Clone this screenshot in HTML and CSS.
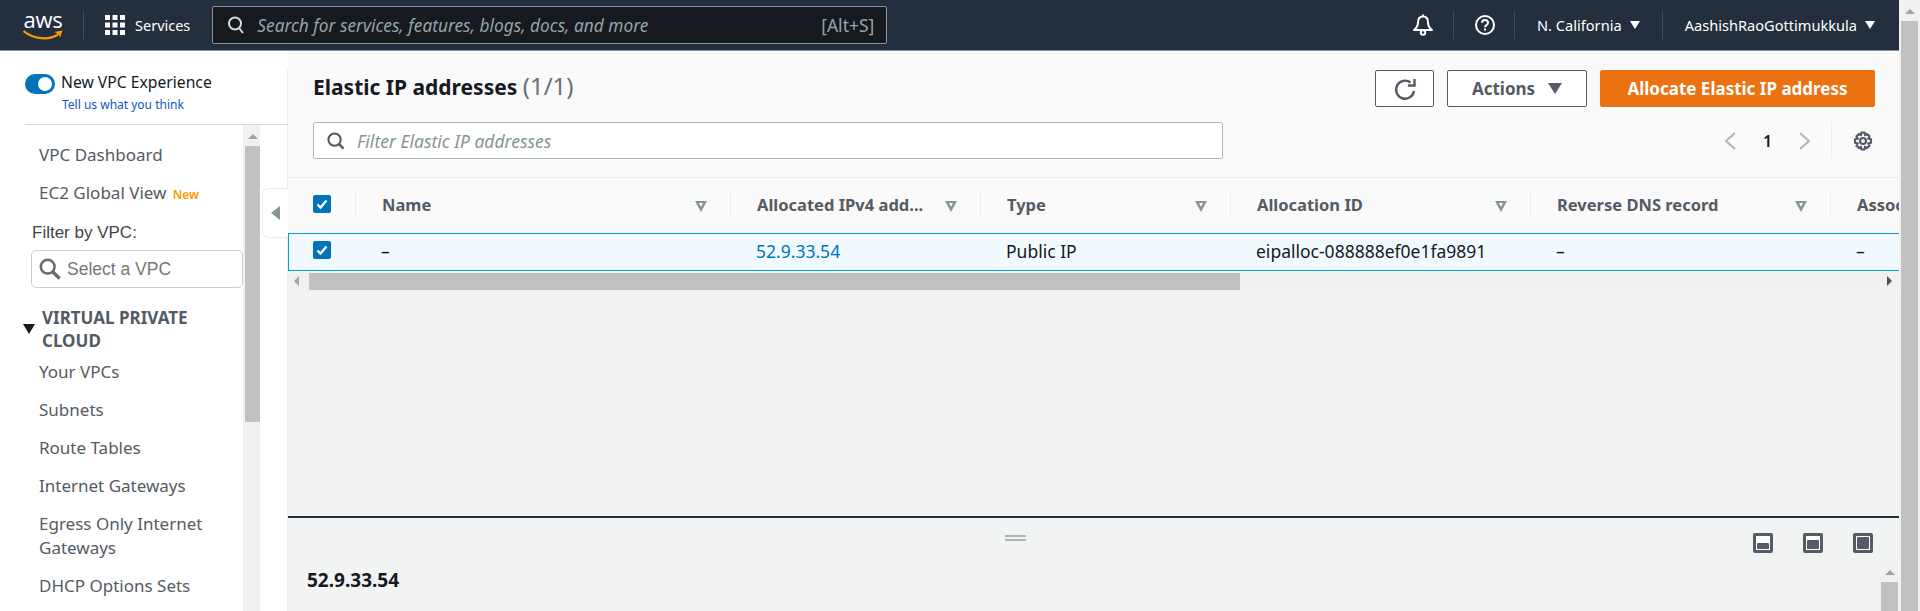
FILE: index.html
```html
<!DOCTYPE html>
<html lang="en">
<head>
<meta charset="utf-8">
<title>Elastic IP addresses</title>
<link rel="stylesheet" href="styles.css">
</head>
<body>
<div class="page">
  <div class="viewport">
    <header class="topbar">
      <div class="logo">
        <span class="logo-text">aws</span>
        <svg class="smile" width="40" height="10" viewBox="0 0 40 10"><path d="M0.500 1c11 9 26 9 34.500 3.500" fill="none" stroke="#f90" stroke-width="2.200"/><path d="M31 2l8.500-1.500-2.500 7.500c-.2-2.500-1.500-4.500-6-6z" fill="#f90"/></svg>
      </div>
      <button class="services">
        <svg width="20" height="20" viewBox="0 0 20 20" fill="#fff"><rect x="0" y="0" width="5" height="5"/><rect x="7.500" y="0" width="5" height="5"/><rect x="15" y="0" width="5" height="5"/><rect x="0" y="7.500" width="5" height="5"/><rect x="7.500" y="7.500" width="5" height="5"/><rect x="15" y="7.500" width="5" height="5"/><rect x="0" y="15" width="5" height="5"/><rect x="7.500" y="15" width="5" height="5"/><rect x="15" y="15" width="5" height="5"/></svg>
        <span>Services</span>
      </button>
      <div class="global-search">
        <svg width="18" height="18" viewBox="0 0 18 18" fill="none" stroke="#d5dbdb" stroke-width="2"><circle cx="8" cy="7.500" r="6"/><path d="M12 12l4 5"/></svg>
        <span class="gs-text">Search for services, features, blogs, docs, and more</span>
        <span class="gs-key">[Alt+S]</span>
      </div>
      <div class="top-right">
        <div class="top-item bell">
          <svg width="20" height="22" viewBox="0 0 20 22" fill="none" stroke="#fff" stroke-width="2" stroke-linejoin="round"><path d="M10 2.500c-3.500 0-5 2.500-5 6 0 3.500-1.500 5.500-4 7.500h18c-2.500-2-4-4-4-7.500 0-3.500-1.500-6-5-6z"/><path d="M10 0.500v2"/><circle cx="10" cy="18.500" r="2.200"/></svg>
        </div>
        <div class="top-item help">
          <svg width="20" height="20" viewBox="0 0 20 20" fill="none" stroke="#fff" stroke-width="2"><circle cx="10" cy="10" r="9"/><path d="M7 7.800c0-3.800 6-3.800 6 0 0 2.400-3 2.200-3 4.500"/><path d="M10 13.500v2"/></svg>
        </div>
        <div class="top-item region">N. California <span class="caret"></span></div>
        <div class="top-item user">AashishRaoGottimukkula <span class="caret"></span></div>
      </div>
    </header>

    <div class="body">
      <aside class="sidenav">
        <div class="vpc-toggle">
          <div class="toggle-row"><span class="toggle"></span><span class="toggle-label">New VPC Experience</span></div>
          <a class="feedback">Tell us what you think</a>
        </div>
        <div class="nav-wrap">
          <nav class="nav-list">
            <a class="nav-link first">VPC Dashboard</a>
            <a class="nav-link">EC2 Global View <span class="new">New</span></a>
            <div class="filter-label">Filter by VPC:</div>
            <div class="filter-box">
              <svg width="22" height="22" viewBox="0 0 24 24" fill="none" stroke="#6b6b6b" stroke-width="2.800"><circle cx="9.500" cy="9.500" r="7.500"/><path d="M15 15l7.500 7.500" stroke-width="3.800"/></svg>
              <span>Select a VPC</span>
            </div>
            <div class="nav-section"><span class="section-caret"></span><span>VIRTUAL PRIVATE CLOUD</span></div>
            <a class="nav-link">Your VPCs</a>
            <a class="nav-link">Subnets</a>
            <a class="nav-link">Route Tables</a>
            <a class="nav-link">Internet Gateways</a>
            <a class="nav-link">Egress Only Internet Gateways</a>
            <a class="nav-link">DHCP Options Sets</a>
          </nav>
          <div class="vscroll nav-scroll"><span class="arrow-up"></span><span class="thumb"></span></div>
          <div class="collapse-col"><div class="collapse-tab"><span class="left-caret"></span></div></div>
        </div>
      </aside>

      <main class="main">
        <section class="toolbar">
          <div class="title-row">
            <h1>Elastic IP addresses <span class="count">(1/1)</span></h1>
            <div class="actions">
              <button class="btn btn-icon"><svg width="24" height="24" viewBox="0 0 24 24" fill="none" stroke="#545b64" stroke-width="2.400"><path d="M17.500 5.500A9 9 0 1 0 21 14"/><path d="M21.500 2v6.500H15"/></svg></button>
              <button class="btn btn-actions">Actions <span class="caret-dark"></span></button>
              <button class="btn btn-primary">Allocate Elastic IP address</button>
            </div>
          </div>
          <div class="filter-row">
            <div class="filter-input">
              <svg width="18" height="18" viewBox="0 0 19 19" fill="none" stroke="#545b64" stroke-width="2.200"><circle cx="8" cy="8" r="6.500"/><path d="M12.500 12.500l5 5" stroke-width="2.600"/></svg>
              <span>Filter Elastic IP addresses</span>
            </div>
            <div class="pager">
              <svg width="12" height="18" viewBox="0 0 12 18" fill="none" stroke="#aab7b8" stroke-width="2"><path d="M11 1L2 9l9 8"/></svg>
              <span class="page-no">1</span>
              <svg width="12" height="18" viewBox="0 0 12 18" fill="none" stroke="#aab7b8" stroke-width="2"><path d="M1 1l9 8-9 8"/></svg>
              <span class="pager-sep"></span>
              <svg class="gear" width="20" height="20" viewBox="0 0 20 20" fill="none" stroke="#545b64"><circle cx="10" cy="10" r="3" stroke-width="2.200"/><path d="M8.500 1.500h3l.5 2.500 2-1 2.500 2.200-1.200 2.300 2.700.800v3.400l-2.700.800 1.200 2.300-2.500 2.200-2-1-.5 2.500h-3l-.5-2.500-2 1-2.500-2.200 1.200-2.300-2.700-.8V8.300l2.700-.8-1.200-2.300L6 3l2 1z" stroke-width="2.100"/></svg>
            </div>
          </div>
        </section>

        <div class="table">
          <div class="thead">
            <div class="cell check"><span class="checkbox"><svg width="14" height="14" viewBox="0 0 14 14" fill="none" stroke="#fff" stroke-width="2.400"><path d="M2.500 7.500l3 3 6-7"/></svg></span></div>
            <div class="cell c-name"><span class="th-label">Name</span><span class="sort"></span></div>
            <div class="cell c-ip"><span class="th-label">Allocated IPv4 add...</span><span class="sort"></span></div>
            <div class="cell c-type"><span class="th-label">Type</span><span class="sort"></span></div>
            <div class="cell c-id"><span class="th-label">Allocation ID</span><span class="sort"></span></div>
            <div class="cell c-dns"><span class="th-label">Reverse DNS record</span><span class="sort"></span></div>
            <div class="cell c-last"><span class="th-label">Assoc</span></div>
          </div>
          <div class="trow">
            <div class="cell check"><span class="checkbox"><svg width="14" height="14" viewBox="0 0 14 14" fill="none" stroke="#fff" stroke-width="2.400"><path d="M2.500 7.500l3 3 6-7"/></svg></span></div>
            <div class="cell c-name">–</div>
            <div class="cell c-ip"><a class="ip-link">52.9.33.54</a></div>
            <div class="cell c-type">Public IP</div>
            <div class="cell c-id">eipalloc-088888ef0e1fa9891</div>
            <div class="cell c-dns">–</div>
            <div class="cell c-last">–</div>
          </div>
          <div class="hscroll"><span class="arrow-left"></span><span class="h-thumb"></span><span class="arrow-right"></span></div>
        </div>

        <div class="spacer"></div>

        <section class="detail">
          <div class="grip"></div>
          <div class="size-icons">
            <span class="size-icon"><span class="fill small"></span></span>
            <span class="size-icon"><span class="fill medium"></span></span>
            <span class="size-icon"><span class="fill large"></span></span>
          </div>
          <div class="detail-body">
            <div class="detail-title">52.9.33.54</div>
            <div class="vscroll detail-scroll"><span class="arrow-up"></span><span class="thumb"></span></div>
          </div>
        </section>
      </main>
    </div>
  </div>
  <div class="page-scroll"><span class="arrow-up"></span><span class="thumb"></span></div>
</div>
</body>
</html>
```
FILE: styles.css
```css
* { box-sizing: border-box; }
html, body { margin: 0; height: 100%; overflow: hidden; }
body { font-family: "Noto Sans", "Open Sans", sans-serif; font-size: 16px; color: #16191f; }
a { text-decoration: none; }
button { font-family: inherit; }
.page { display: flex; height: 611px; }
.viewport { flex: 1; min-width: 0; display: flex; flex-direction: column; }

.topbar { height: 51px; flex: none; background: #232f3e; border-bottom: 1px solid #879596; display: flex; align-items: center; color: #fff; }
.logo { width: 46px; margin-left: 20px; display: flex; flex-direction: column; align-items: center; }
.logo-text { font-family: "Open Sans", sans-serif; font-size: 22px; line-height: 18px; height: 18px; color: #fff; letter-spacing: -.2px; }
.smile { display: block; margin-top: 2px; }
.services { margin-left: 17px; height: 28px; padding: 0 0 0 21px; background: none; border: 0; border-left: 1px solid #414d5c; color: #fff; display: flex; align-items: center; gap: 10px; font-size: 14.500px; }
.global-search { margin-left: 22px; width: 675px; height: 38px; background: #16191f; border: 1px solid #879596; border-radius: 2px; display: flex; align-items: center; padding: 0 12px 0 14px; }
.gs-text { margin-left: 12px; flex: 1; font-size: 17.300px; font-style: italic; color: #95a5a6; }
.gs-key { font-size: 17.500px; color: #95a5a6; }
.top-right { margin-left: auto; display: flex; align-items: center; height: 28px; }
.top-item { height: 28px; display: flex; align-items: center; font-size: 14.600px; white-space: nowrap; gap: 8px; }
.bell { padding-right: 20px; }
.help { border-left: 1px solid #414d5c; padding: 0 19px 0 21px; }
.region { border-left: 1px solid #414d5c; padding: 0 22px 0 22px; }
.user { border-left: 1px solid #414d5c; padding: 0 24px 0 22px; }
.caret { width: 0; height: 0; border-left: 5px solid transparent; border-right: 5px solid transparent; border-top: 8px solid #fff; }

.body { flex: 1; min-height: 0; display: flex; }
.sidenav { width: 288px; flex: none; display: flex; flex-direction: column; background: #fff; }
.vpc-toggle { margin: 19px 0 0 25px; height: 55px; padding-top: 4px; border-bottom: 1px solid #d5dbdb; border-right: 1px solid #eaeded; flex: none; }
.toggle-row { display: flex; align-items: flex-start; gap: 6px; font-size: 15.700px; color: #16191f; line-height: 20px; }
.toggle-label { margin-top: -2px; }
.toggle { width: 30px; height: 20px; border-radius: 10px; background: #0073bb; position: relative; flex: none; }
.toggle::after { content: ""; position: absolute; right: 3px; top: 3px; width: 14px; height: 14px; border-radius: 50%; background: #fff; }
.feedback { display: block; margin: 3px 0 0 37px; font-size: 12px; color: #0f55c4; line-height: 16px; }
.nav-wrap { flex: 1; min-height: 0; display: flex; overflow: hidden; }
.nav-list { width: 243px; flex: none; }
.nav-link { display: block; margin-left: 39px; padding: 7px 0; color: #545b64; font-size: 17px; line-height: 24px; }
.nav-link.first { padding-top: 18px; }
.new { color: #ff9900; font-size: 12px; font-weight: 600; margin-left: 2px; }
.filter-label { margin-left: 32px; margin-top: 8px; font-family: "Liberation Sans", sans-serif; font-size: 17px; line-height: 22px; color: #444; }
.filter-box { margin: 6px 0 0 31px; width: 212px; height: 38px; border: 1px solid #c9cdd1; border-radius: 5px; display: flex; align-items: center; padding-left: 7px; gap: 6px; font-family: "Liberation Sans", sans-serif; font-size: 17.500px; color: #777; }
.nav-section { position: relative; margin: 18px 0 1px 42px; font-size: 17px; font-weight: 700; line-height: 23px; color: #545b64; width: 180px; }
.section-caret { position: absolute; left: -19px; top: 18px; width: 0; height: 0; border-left: 6px solid transparent; border-right: 6px solid transparent; border-top: 10px solid #16191f; }

.vscroll { position: relative; background: #f1f1f1; flex: none; padding-left: 2px; }
.arrow-up { display: block; height: 0; width: 0; margin: 9px auto 0; border-left: 5px solid transparent; border-right: 5px solid transparent; border-bottom: 5px solid #a3a3a3; }
.thumb { display: block; background: #c1c1c1; }
.nav-scroll { width: 17px; }
.nav-scroll .thumb { height: 276px; margin-top: 7px; }

.collapse-col { width: 28px; flex: none; background: #fff; padding: 63px 0 0 2px; border-right: 1px solid #eaeded; }
.collapse-tab { width: 26px; height: 50px; background: #fff; border: 1px solid #eaeded; border-right: 0; border-radius: 6px 0 0 6px; display: flex; align-items: center; justify-content: center; }
.left-caret { width: 0; height: 0; border-top: 7px solid transparent; border-bottom: 7px solid transparent; border-right: 9px solid #879596; }

.main { flex: 1; min-width: 0; display: flex; flex-direction: column; background: #f2f3f3; overflow: hidden; }
.toolbar { height: 127px; flex: none; background: #fafafa; border-bottom: 1px solid #eaeded; padding: 19px 24px 0 25px; }
.title-row { display: flex; align-items: flex-start; justify-content: space-between; }
h1 { margin: 0; font-size: 21px; font-weight: 700; line-height: 34px; color: #16191f; }
.count { font-weight: 400; font-size: 24px; line-height: 1; color: #687078; }
.actions { display: flex; gap: 13px; }
.btn { height: 37px; border-radius: 2px; border: 1px solid #545b64; background: #fff; color: #545b64; font-size: 17px; font-weight: 700; display: flex; align-items: center; justify-content: center; }
.btn-icon { width: 59px; padding: 0; }
.btn-actions { width: 140px; gap: 13px; }
.caret-dark { width: 0; height: 0; border-left: 7px solid transparent; border-right: 7px solid transparent; border-top: 11px solid #545b64; }
.btn-primary { width: 275px; background: #ec7211; border-color: #ec7211; color: #fff; }
.filter-row { margin-top: 15px; display: flex; align-items: center; justify-content: space-between; }
.filter-input { width: 910px; height: 37px; background: #fff; border: 1px solid #aab7b8; border-radius: 2px; display: flex; align-items: center; padding-left: 13px; gap: 12px; font-size: 17.500px; font-style: italic; color: #879596; }
.pager { display: flex; align-items: center; height: 37px; }
.page-no { width: 63px; text-align: center; font-weight: 600; font-size: 16px; }
.pager-sep { width: 1px; height: 37px; background: #eaeded; margin: 0 21px 0 20px; }
.gear { margin-right: 2px; }

.table { flex: none; }
.thead, .trow { display: flex; white-space: nowrap; overflow: hidden; }
.thead { height: 55px; background: #fafafa; font-size: 16.500px; }
.trow { height: 38px; background: #f1faff; border-top: 1px solid #00a1c9; border-bottom: 1px solid #00a1c9; border-left: 1px solid #00a1c9; font-size: 17.500px; }
.cell { flex: none; display: flex; align-items: center; position: relative; padding-left: 26px; padding-right: 24px; }
.trow .cell { padding-left: 25px; padding-bottom: 2px; }
.thead .cell { justify-content: space-between; font-weight: 700; color: #545b64; }
.thead .cell:not(:last-child)::after { content: ""; position: absolute; right: 0; top: 12px; height: 26px; width: 1px; background: #eaeded; }
.thead .check { width: 68px; padding: 0 0 0 25px; }
.trow .check { width: 67px; padding: 0 0 2px 24px; }
.c-name { width: 375px; }
.c-ip { width: 250px; }
.c-type { width: 250px; }
.c-id { width: 300px; }
.c-dns { width: 300px; }
.c-last { width: 250px; }
.checkbox { width: 18px; height: 18px; background: #0073bb; border-radius: 2px; display: flex; align-items: center; justify-content: center; margin-top: -3px; }
.trow .checkbox { margin-top: -2px; }
.th-label { margin-top: -2px; }
.sort { width: 0; height: 0; margin-top: 1px; border-left: 6.500px solid transparent; border-right: 6.500px solid transparent; border-top: 11px solid #879596; position: relative; }
.sort::after { content: ""; position: absolute; left: -2.500px; top: -8.500px; width: 0; height: 0; border-left: 2.500px solid transparent; border-right: 2.500px solid transparent; border-top: 4px solid #fafafa; }
.ip-link { color: #0073bb; }
.hscroll { height: 18px; margin-top: 1px; background: #f1f1f1; display: flex; align-items: center; position: relative; }
.arrow-left { width: 0; height: 0; margin-left: 6px; border-top: 5px solid transparent; border-bottom: 5px solid transparent; border-right: 5px solid #a3a3a3; }
.h-thumb { width: 931px; height: 17px; margin-left: 10px; background: #c1c1c1; }
.arrow-right { width: 0; height: 0; margin-left: auto; margin-right: 7px; border-top: 5px solid transparent; border-bottom: 5px solid transparent; border-left: 5px solid #505050; }

.spacer { flex: 1; }
.detail { height: 95px; flex: none; border-top: 2px solid #232f3e; position: relative; }
.grip { position: absolute; left: 717px; top: 17px; width: 21px; height: 6px; border-top: 2px solid #aab7b8; border-bottom: 2px solid #aab7b8; }
.size-icons { position: absolute; right: 26px; top: 15px; display: flex; gap: 30px; }
.size-icon { width: 20px; height: 20px; border: 3px solid #545b64; border-radius: 2px; display: flex; align-items: flex-end; padding: 1px; background: #fff; }
.fill { display: block; width: 100%; background: #545b64; border-radius: 1px; }
.fill.small { height: 6px; }
.fill.medium { height: 9px; }
.fill.large { height: 12px; }
.detail-body { display: flex; justify-content: space-between; padding: 43px 1px 0 19px; height: 93px; }
.detail-title { font-size: 19px; font-weight: 700; line-height: 26px; margin-top: 6px; }
.detail-scroll { width: 19px; height: 50px; }
.detail-scroll .thumb { height: 40px; margin-top: 7px; }

.page-scroll { width: 21px; flex: none; background: #f1f1f1; padding: 0 2px; }
.page-scroll .thumb { height: 590px; margin-top: 7px; }
```
